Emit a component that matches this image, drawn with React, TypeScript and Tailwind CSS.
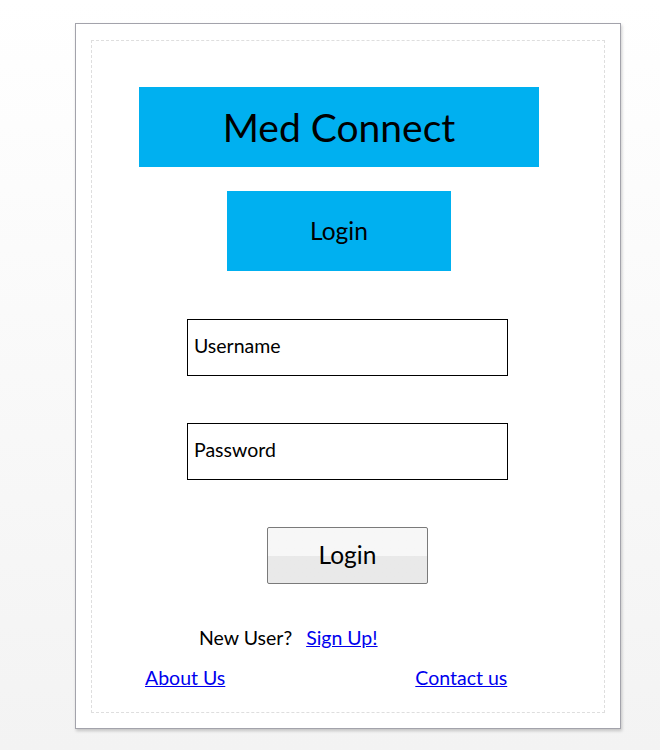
import React from "react";

const font = { fontFamily: "Lato, 'Open Sans', sans-serif" };

const App = () => {
  return (
    <div
      className="min-h-screen w-[660px] h-[750px] bg-gradient-to-b from-white to-[#f3f3f3] pl-[75px] pt-[23px]"
      style={font}
    >
      <div className="w-[546px] h-[706px] bg-white border border-[#a3a3ab] shadow-[1px_2px_3px_rgba(0,0,0,0.2)] pl-[15px] pt-[16px]">
        <div className="w-[514px] h-[673px] border border-dashed border-[#dedede] flex flex-col text-black">
          <div className="ml-[47px] mt-[46px] w-[400px] h-[80px] bg-[#00b0f0] flex items-center justify-center text-[39px]">
            Med Connect
          </div>
          <div className="ml-[135px] mt-[24px] w-[224px] h-[80px] bg-[#00b0f0] flex items-center justify-center text-[24.5px]">
            Login
          </div>
          <div className="ml-[95px] mt-[48px] w-[321px] h-[57px] border border-black flex items-center px-[6px] pb-[3px] text-[19.5px]">
            Username
          </div>
          <div className="ml-[95px] mt-[47px] w-[321px] h-[57px] border border-black flex items-center px-[6px] pb-[3px] text-[19.5px]">
            Password
          </div>
          <button className="ml-[175px] mt-[47px] w-[161px] h-[57px] border border-[#7a7a7a] rounded-[2px] bg-gradient-to-b from-[#f7f7f7] from-50% to-[#e9e9e9] to-50% flex items-center justify-center text-[24.5px] text-black">
            Login
          </button>
          <div className="ml-[107px] mt-[42px] flex items-center text-[19.5px] h-[24px]">
            <span>New User?</span>
            <a href="#" className="ml-[14px] text-[#0000ee] underline">
              Sign Up!
            </a>
          </div>
          <div className="mt-[16px] flex items-center text-[19.5px] h-[24px]">
            <a href="#" className="ml-[53px] text-[#0000ee] underline">
              About Us
            </a>
            <a href="#" className="ml-[190px] text-[#0000ee] underline">
              Contact us
            </a>
          </div>
        </div>
      </div>
    </div>
  );
};

export default App;
